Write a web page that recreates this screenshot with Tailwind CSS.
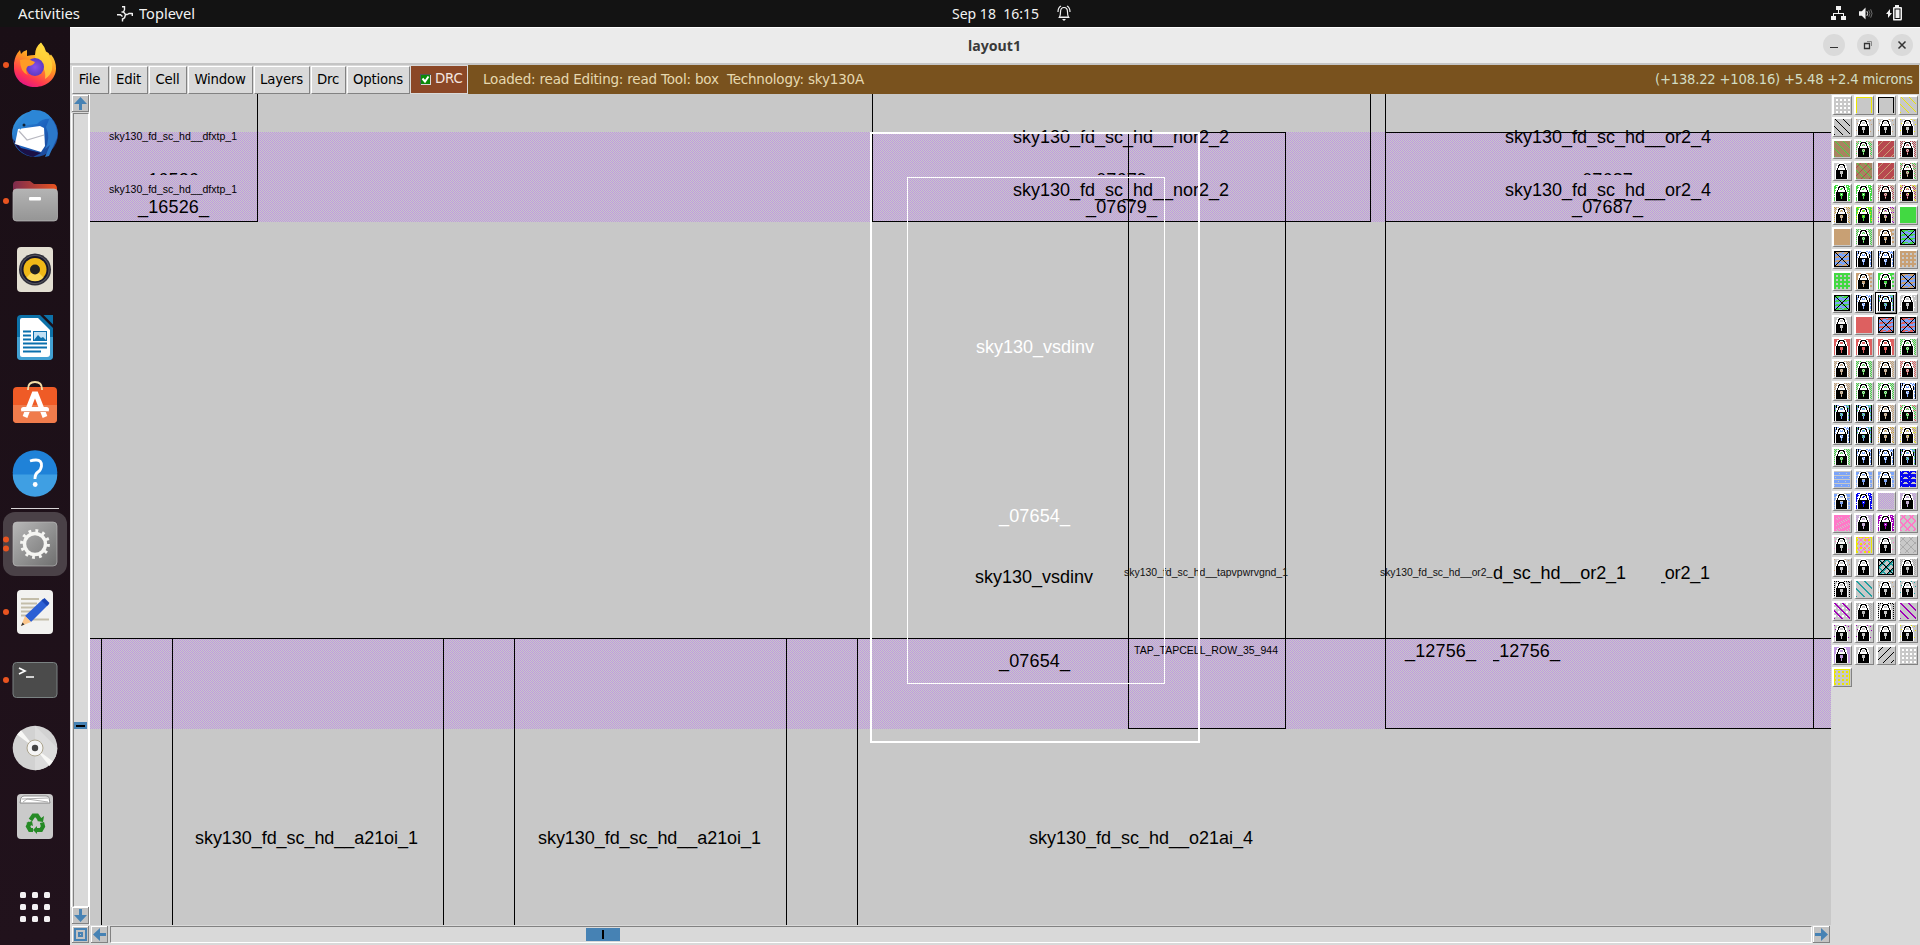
<!DOCTYPE html>
<html lang="en">
<head>
<meta charset="utf-8">
<title>layout1</title>
<script src="https://cdn.jsdelivr.net/npm/@tailwindcss/browser@4"></script>
</head>
<body class="w-[1920px] h-[945px] overflow-hidden flex flex-col bg-[#d9d9d9] font-['DejaVu_Sans',sans-serif]">

<!-- System bar -->
<header class="h-[27px] shrink-0 bg-[#131313] text-[#f2f2f2] flex items-center font-['Noto_Sans',sans-serif] text-[14.5px] leading-none whitespace-pre">
  <div class="w-[117px] pl-[18px]"><svg class="block" width="64" height="20"><text x="0" y="14.500" textLength="62" lengthAdjust="spacingAndGlyphs" fill="#f2f2f2">Activities</text></svg></div>
  <svg class="w-[16px] h-[16px]" viewBox="0 0 16 16" fill="none" stroke="#f2f2f2" stroke-width="1.4"><path d="M5 .7h2.500v3L6.500 6l2 2.500h2M6.500 6H4.500M0 8.700h3.500l2 1.800M10.500 8.500l1.500-1h3.500M15.300 7v3M8.500 8.500l-1 3.500M7.500 12l-2 1v2.500"/></svg>
  <svg class="ml-[6px]" width="60" height="20"><text x="0" y="14.500" textLength="56" lengthAdjust="spacingAndGlyphs" fill="#f2f2f2">Toplevel</text></svg>
  <div class="ml-[753px]"><svg class="block" width="90" height="20"><text x="0" y="14.500" textLength="87" lengthAdjust="spacingAndGlyphs" fill="#f2f2f2" xml:space="preserve">Sep 18  16:15</text></svg></div>
  <svg class="ml-[15px] -mt-px" width="14" height="17" viewBox="0 0 14 17" fill="none" stroke="#f2f2f2" stroke-width="1.200"><path d="M2.500 12c1-1.500 1-3 1-5C3.500 4 5 2.500 7 2.500S10.500 4 10.500 7c0 2 0 3.500 1 5zM1.500 12.500h11M1 7C1 4 2 2 4 1M13 7c0-3-1-5-3-6"/><path d="M5 14h4l-2 2z" fill="#f2f2f2" stroke="none"/></svg>
  <div class="ml-auto mr-[17px] -mt-px flex items-center gap-[13px]">
    <svg width="15" height="15" viewBox="0 0 15 15" fill="#f2f2f2"><path d="M5 0h5v4H5zM0 10h5v4H0zM10 10h5v4h-5zM7 4h1v3h5v3h-1V8H3v2H2V7h5z"/></svg>
    <svg width="14" height="15" viewBox="0 0 15 15" fill="#f2f2f2"><path d="M0 5h3l4-4v13l-4-4H0z"/><path d="M8.500 5q1.500 2.500 0 5" fill="none" stroke="#f2f2f2"/><path d="M10.500 4q2.500 3.500 0 7M12.500 3q3 4.500 0 9" fill="none" stroke="#777"/></svg>
    <svg width="17" height="16" viewBox="0 0 17 16" fill="#f2f2f2"><path d="M4 4v4h2l-4 5V9H0z"/><path d="M9 0h4v2h2q1 0 1 1v11q0 1.500-1.500 1.500h-7Q7 15.500 7 14V3q0-1 1-1h1zM8.500 3.500v10.500h6V3.500z" fill-rule="evenodd"/><path d="M9.500 4.500h4v8.500h-4z"/></svg>
  </div>
</header>

<div class="flex flex-1 min-h-0">
<!-- Dock -->
<nav class="w-[70px] shrink-0 bg-gradient-to-b from-[#1a0f16] to-[#21121c] flex flex-col items-center pt-[5px]">
 <svg width="70" height="64" viewBox="0 0 70 64">
  <defs><linearGradient id="ff" x1=".8" y1="0" x2=".3" y2="1"><stop offset="0" stop-color="#fff44f"/><stop offset=".45" stop-color="#ff9a20"/><stop offset=".8" stop-color="#ff3750"/><stop offset="1" stop-color="#e31587"/></linearGradient><radialGradient id="fp"><stop offset="0" stop-color="#8b50ea"/><stop offset="1" stop-color="#5b3ac4"/></radialGradient>
  <linearGradient id="tb" x1="0" y1="0" x2="1" y2="1"><stop offset="0" stop-color="#3ba2e4"/><stop offset=".5" stop-color="#1c62be"/><stop offset="1" stop-color="#1d3f8a"/></linearGradient>
  <linearGradient id="fo" x1="0" x2="1"><stop offset="0" stop-color="#7d2b4e"/><stop offset="1" stop-color="#e95420"/></linearGradient><linearGradient id="gr" x1="0" y1="0" x2="0" y2="1"><stop offset="0" stop-color="#b4b4b4"/><stop offset="1" stop-color="#959595"/></linearGradient></defs>
  <circle cx="6" cy="33" r="3" fill="#e95420"/>
  <path d="M14 31q1-8 6-13l1 4q2-3 6-4l0 6q4-1 8-1 0-8 6-12.500 4 4.500 5 9 3 1 4 4l1-1q5 6 5 14c0 10-9 18.500-21 18.500S14 47 14 36z" fill="url(#ff)"/>
  <path d="M41 11q3 4 4 9 9 8 7 18-2 6-7 9 2-12-10-19 0-11 6-17" fill="#ffd83c" opacity=".75"/>
  <circle cx="35" cy="35" r="9" fill="url(#fp)"/><path d="M20 28q8-2 15 2-2 4-7 4-4 4 0 9-8-3-8-15" fill="#ff9b25"/>
 </svg>
 <svg class="mt-1" width="70" height="64" viewBox="0 0 70 64">
  <circle cx="35" cy="34" r="23" fill="url(#tb)"/><path d="M13 39q4 14 20 18l8-4-20-5z" fill="#1b1146"/><path d="M18 29L40 26 44 28 45 46 41 52 15 44z" fill="#fff"/><path d="M19 31l8 9 17-5" fill="none" stroke="#b8b8c0" stroke-width="1.200"/><path d="M20 28q1-12 12-18 14-1 20 9-10-1-15 5l-10 1q-5 1-7 5z" fill="#2c86d6"/><path d="M50 17q9 10 7 21l-8 18-4 1 5-12-5 4q6-11 1-22z" fill="#2b78ca"/><circle cx="24" cy="25" r="1.500" fill="#123"/>
 </svg>
 <svg class="mt-1" width="70" height="64" viewBox="0 0 70 64">
  <circle cx="6" cy="33" r="3" fill="#e95420"/><path d="M13 17q0-4 4-4h13l4 3h19q4 0 4 5v15H13z" fill="url(#fo)"/><rect x="13" y="21" width="44.500" height="32" rx="3.500" fill="url(#gr)" stroke="#bdbdbd" stroke-width=".7"/><rect x="29" y="29" width="12" height="3.500" rx="1" fill="#fff"/>
 </svg>
 <svg class="mt-1" width="70" height="64" viewBox="0 0 70 64">
  <rect x="17" y="11" width="36" height="45" rx="4" fill="#e2ded2"/><circle cx="35" cy="33.500" r="16" fill="#30303a"/><circle cx="35" cy="33.500" r="14.500" fill="#555560"/><circle cx="35" cy="33.500" r="13.500" fill="#17172a"/><circle cx="35" cy="33.500" r="11.500" fill="#efb817"/><path d="M26.500 41.500a11.500 11.500 0 0 0 17 0L35 33z" fill="#fbd858"/><circle cx="35" cy="33.500" r="5" fill="#222"/>
 </svg>
 <svg class="mt-1" width="70" height="64" viewBox="0 0 70 64">
  <g transform="translate(0 1)"><path d="M21 10h19l13 13v28q0 4-4 4H21q-4 0-4-4V14q0-4 4-4" fill="#0d72a9"/><path d="M17 32h36v19q0 4-4 4H21q-4 0-4-4z" fill="#42a0d2"/><path d="M22 13h16l12 12v24q0 3-3 3H22q-2 0-2-2V15q0-2 2-2" fill="#fff"/><path d="M43.500 10H53v9.500z" fill="#0d72a9"/><path d="M23 26.500h8M23 30.500h8M23 34.500h8M23 38.500h24M23 42.500h24M23 46.500h18" stroke="#0b70ad" stroke-width="2"/><rect x="33.500" y="26.500" width="13" height="9" fill="#bfe0f5" stroke="#0b70ad"/><path d="M34 35l4-5 3 3 2-1 3 3z" fill="#0b70ad"/></g>
 </svg>
 <svg class="mt-1" width="70" height="64" viewBox="0 0 70 64">
  <g transform="translate(0 1)"><rect x="13" y="14" width="44" height="36" rx="4" fill="#ef5b26"/><path d="M13 32h44v14q0 4-4 4H17q-4 0-4-4z" fill="#f07c4c"/><path d="M28 17v-1q0-7 7-7t7 7v1" fill="none" stroke="#f6dfa8" stroke-width="1.800"/><path d="M25 44l9-23h2l9 23" fill="none" stroke="#fff" stroke-width="5"/><rect x="21" y="34" width="28" height="5" rx="2.500" fill="#fff"/><path d="M21.500 38.500h27" stroke="#e8a185"/></g>
 </svg>
 <svg class="mt-1" width="70" height="64" viewBox="0 0 70 64">
  <circle cx="35" cy="32.500" r="22.300" fill="#1f82d8"/><path d="M12.700 34.500a22.300 22.300 0 0 0 44.600 0z" fill="#3f9fe3"/><path d="M30 21q3-1 6-1 6 0 5.500 6-.5 4-3.500 6-3 2-3 6v1" fill="none" stroke="#fff" stroke-width="2.800"/><circle cx="35.200" cy="44.500" r="2.400" fill="#fff"/>
 </svg>
 <div class="h-px w-[48px] bg-[#d8d4d6] mt-[4px] mb-[3px] shrink-0"></div>
 <svg class="shrink-0" width="70" height="64" viewBox="0 0 70 64">
  <rect x="3" y="0" width="64" height="64" rx="12" fill="#4a4147"/><circle cx="6" cy="27.500" r="3" fill="#e95420"/><circle cx="6" cy="36.500" r="3" fill="#e95420"/>
  <defs><linearGradient id="sg" x1="0" y1="0" x2="1" y2="1"><stop offset="0" stop-color="#b8b8b8"/><stop offset="1" stop-color="#6f6f6f"/></linearGradient></defs>
  <rect x="13" y="10" width="44" height="44" rx="4" fill="url(#sg)" stroke="#c0c0c0" stroke-width=".6"/><circle cx="35" cy="32" r="10.500" fill="none" stroke="#f5f5f2" stroke-width="3.400"/><circle cx="35" cy="32" r="13.200" fill="none" stroke="#f5f5f2" stroke-width="3.400" stroke-dasharray="2.800 4.112"/>
 </svg>
 <svg class="mt-1" width="70" height="64" viewBox="0 0 70 64">
  <circle cx="6" cy="32" r="3" fill="#e95420"/><rect x="17" y="10" width="36" height="44" rx="4" fill="#f2f2f0"/><path d="M21 19h18M21 23.500h16M21 27.500h14M21 31.500h10M21 35.500h8M30 39.500h19" stroke="#c3bda9" stroke-width="1.800"/><path d="M25 36L43 19l6 5-18 18z" fill="#2c5fd4"/><path d="M41.500 20.500l3-2.500 5 5-2.500 3z" fill="#1a45b4"/><path d="M21 46l4-10 6 6z" fill="#fbc68b"/><path d="M21 46l1.500-3.500 2 2z" fill="#333"/>
 </svg>
 <svg class="mt-1" width="70" height="64" viewBox="0 0 70 64">
  <circle cx="6" cy="32" r="3" fill="#e95420"/><rect x="13" y="14.500" width="44" height="35" rx="3.500" fill="#4b4b4b" stroke="#7a8282"/><path d="M19 20l6 3-6 3" fill="none" stroke="#fff" stroke-width="1.700"/><path d="M26 29h8" stroke="#fff" stroke-width="1.500"/>
 </svg>
 <svg class="mt-1" width="70" height="64" viewBox="0 0 70 64">
  <circle cx="35" cy="32" r="22.300" fill="#d2d2d2"/><path d="M35 9.700v44.600a22.300 22.300 0 0 0 22.300-22.300z" fill="#dcdcdc"/><path d="M35 32L17 18.500l4-4.200zM35 32l18 13.500-3.500 4.500z" fill="#f8f8f6"/><circle cx="35" cy="32" r="8" fill="#f5f5f5" stroke="#aba38c"/><circle cx="35" cy="32" r="3.200" fill="#444"/>
 </svg>
 <svg class="mt-1" width="70" height="64" viewBox="0 0 70 64">
  <rect x="17" y="10" width="36" height="45" rx="4" fill="#cacaca"/><path d="M20 19l1-5q1-2 3-2h22q3 0 3 2l1 5z" fill="#fff" stroke="#777" stroke-width=".8"/><path d="M22 15l26-1M23 18l4-3 21 3" stroke="#999" stroke-width=".8" fill="none"/>
  <g fill="none" stroke="#258a25" stroke-width="4.200"><path d="M30.500 36l3-4.500h3.500l3 4.500"/><path d="M42 38.500l1 4-2 3.500h-5"/><path d="M33 46h-3l-2-3.500 2-4"/></g><path d="M37 37l6 1 1-6zM37 42l-4 4 4 4zM26 39l6-2 1 5z" fill="#258a25"/>
 </svg>
 <svg class="mt-[43px]" width="32" height="32" viewBox="0 0 32 32" fill="#f3f1f2"><g id="gd"><rect x="1" y="1" width="6" height="6" rx="1.500"/><rect x="13" y="1" width="6" height="6" rx="1.500"/><rect x="25" y="1" width="6" height="6" rx="1.500"/></g><use href="#gd" y="12"/><use href="#gd" y="24"/></svg>
</nav>

<!-- Application window -->
<main class="flex-1 min-w-0 flex flex-col">
 <div class="h-[38px] shrink-0 bg-[#ebebeb] border-t border-white border-b-2 border-b-[#c4c4c4] flex items-center relative">
  <svg class="absolute left-[895px] top-[5px]" width="60" height="24"><text x="3" y="18" textLength="53" lengthAdjust="spacingAndGlyphs" font-family="Noto Sans" font-weight="700" font-size="14" fill="#3a3a3a">layout1</text></svg>
  <div class="ml-auto mr-[7px] -mt-px flex gap-3">
   <svg width="22" height="22" viewBox="0 0 22 22"><circle cx="11" cy="11" r="11" fill="#dadada"/><path d="M7 13.500h8" stroke="#333"/></svg>
   <svg width="22" height="22" viewBox="0 0 22 22"><circle cx="11" cy="11" r="11" fill="#dadada"/><path d="M7.500 9.500h5v5h-5z" fill="none" stroke="#333" stroke-width="1.300"/><path d="M10 7.500h4.500V12" fill="none" stroke="#888"/></svg>
   <svg width="22" height="22" viewBox="0 0 22 22"><circle cx="11" cy="11" r="11" fill="#dadada"/><path d="M7.500 7.500l7 7M14.500 7.500l-7 7" stroke="#333" stroke-width="1.500"/></svg>
  </div>
 </div>

 <!-- Menu row -->
 <div class="h-[29px] shrink-0 flex items-stretch bg-[#79521e] text-[13.3px] tracking-[-0.2px] leading-none text-black pr-px mr-px">
  <div class="flex gap-px bg-[#d9d9d9] pl-[2px] pt-px">
   <div class="w-[37px] border border-t-white border-l-white border-r-[#828282] border-b-[#828282] flex items-center justify-center pb-px pr-[2px]"><span>File</span></div>
   <div class="w-[38px] border border-t-white border-l-white border-r-[#828282] border-b-[#828282] flex items-center justify-center pb-px pr-px"><span>Edit</span></div>
   <div class="w-[38px] border border-t-white border-l-white border-r-[#828282] border-b-[#828282] flex items-center justify-center pb-px pr-px"><span>Cell</span></div>
   <div class="w-[65px] border border-t-white border-l-white border-r-[#828282] border-b-[#828282] flex items-center justify-center pb-px pr-px"><span>Window</span></div>
   <div class="w-[56px] border border-t-white border-l-white border-r-[#828282] border-b-[#828282] flex items-center justify-center pb-px pr-px"><span>Layers</span></div>
   <div class="w-[35px] border border-t-white border-l-white border-r-[#828282] border-b-[#828282] flex items-center justify-center pb-px pr-px"><span>Drc</span></div>
   <div class="w-[63px] border border-t-white border-l-white border-r-[#828282] border-b-[#828282] flex items-center justify-center pb-px pr-px"><span>Options</span></div>
   <div class="w-[56px] bg-[#8b4726] text-[#f5e6e0] flex items-center pl-[9px] pb-px mb-px">
    <svg width="11" height="11" viewBox="0 0 11 11"><path d="M0 0h11v11H0z" fill="#d9d9d9"/><path d="M0 0h11v1H1v10H0z" fill="#555"/><path d="M1 1h9v9H1z" fill="#0a8a0a"/><path d="M2.500 4.500l2.500 3 3.500-5" fill="none" stroke="#fff" stroke-width="2"/></svg>
    <span class="ml-[4px]">DRC</span>
   </div>
   <div class="w-0"></div>
  </div>
  <svg class="ml-[15px] mt-[3px]" width="390" height="20"><text x="0" y="15.500" textLength="381" lengthAdjust="spacingAndGlyphs" fill="#e6d9b0" font-size="13.300" xml:space="preserve">Loaded: read Editing: read Tool: box  Technology: sky130A</text></svg>
  <svg class="ml-auto mr-[2px] mt-[3px]" width="264" height="20"><text x="3" y="15.500" textLength="258" lengthAdjust="spacingAndGlyphs" fill="#d2ddc4" font-size="13.300">(+138.22 +108.16) +5.48 +2.4 microns</text></svg>
 </div>

 <div class="flex flex-1 min-h-0">
  <div class="w-[1761px] shrink-0 flex flex-col">
   <div class="flex h-[831px]">
    <!-- Vertical scroll bar -->
    <div class="w-[20px] flex flex-col items-center pt-px border-r border-white">
     <svg class="shrink-0 ml-[2px]" width="17" height="17" viewBox="0 0 17 17"><path d="M0 0h17v17H0z" fill="#828282"/><path d="M0 0h16v16H0z" fill="#fff"/><path d="M1 1h15v15H1z" fill="#c3c3c3"/><path d="M8.500 2L15 9h-5v6H7V9H2z" fill="#4682b4"/></svg>
     <div class="mt-px w-[18px] h-[794px] shrink-0 border-l border-white">
      <div class="ml-px w-[16px] h-[794px] border border-l-[#828282] border-t-[#828282] border-r-white border-b-white pt-[608px]">
       <div class="w-[13px] h-[7px] mx-auto bg-[#4682b4] flex items-center justify-center"><div class="w-[9px] h-[2px] bg-black"></div></div>
      </div>
     </div>
     <svg class="shrink-0 ml-[2px]" width="17" height="17" viewBox="0 0 17 17"><path d="M0 0h17v17H0z" fill="#828282"/><path d="M0 0h16v16H0z" fill="#fff"/><path d="M1 1h15v15H1z" fill="#c3c3c3"/><path d="M8.500 15L2 8h5V2h3v6h5z" fill="#4682b4"/></svg>
    </div>

    <!-- Layout canvas -->
    <svg class="block shrink-0" width="1741" height="831" viewBox="90 94 1741 831" font-family="Liberation Sans, Arial, sans-serif" font-size="18">
     <defs>
      <pattern id="nw" width="2" height="2" patternUnits="userSpaceOnUse"><path d="M0 0h1v1H0zM1 1h1v1H1z" fill="#c098e0" shape-rendering="crispEdges"/></pattern>
      <clipPath id="c1"><path d="M90 170h1741v5H90z"/></clipPath>
      <clipPath id="c2"><path d="M1493 640h200v40h-200zM1661 560h100v30h-100z"/></clipPath>
      <clipPath id="c3"><path d="M1370 560h123v30h-123z"/></clipPath>
     </defs>
     <path d="M90 94h1741v831H90z" fill="#c8c8c8"/>
     <path d="M90 132h1741v90H90zM90 639h1741v90H90z" fill="url(#nw)"/>
     <g fill="none" stroke="#000" shape-rendering="crispEdges">
      <path d="M257.500 94V221.500H90M872.500 94V221.500H1370.500V94M872.500 132.500H1285.500V728.500H1128.500V132.500"/>
      <path d="M1385.500 94V728.500H1831M1385.500 132.500H1831M1385.500 221.500H1831M1813.500 132V728M90 638.500H1831"/>
      <path d="M101.500 638V925M172.500 638V925M443.500 638V925M514.500 638V925M786.500 638V925M857.500 638V925"/>
     </g>
     <g fill="#000">
      <text x="109" y="140" font-size="10.500" textLength="128" lengthAdjust="spacingAndGlyphs">sky130_fd_sc_hd__dfxtp_1</text>
      <text x="109" y="193" font-size="10.500" textLength="128" lengthAdjust="spacingAndGlyphs">sky130_fd_sc_hd__dfxtp_1</text>
      <text x="138" y="213" textLength="71">_16526_</text>
      <text x="1013" y="143" textLength="216">sky130_fd_sc_hd__nor2_2</text>
      <text x="1013" y="196" textLength="216">sky130_fd_sc_hd__nor2_2</text>
      <text x="1086" y="213" textLength="71">_07679_</text>
      <text x="1505" y="143" textLength="206">sky130_fd_sc_hd__or2_4</text>
      <text x="1505" y="196" textLength="206">sky130_fd_sc_hd__or2_4</text>
      <text x="1572" y="213" textLength="71">_07687_</text>
      <g clip-path="url(#c1)"><text x="138" y="186" textLength="71">_16526_</text><text x="1086" y="186" textLength="71">_07679_</text><text x="1572" y="186" textLength="71">_07687_</text></g>
      <text x="975" y="583" textLength="118">sky130_vsdinv</text>
      <text x="999" y="667" textLength="71">_07654_</text>
      <text x="1124" y="576" font-size="10.500" fill="#111" textLength="164" lengthAdjust="spacingAndGlyphs">sky130_fd_sc_hd__tapvpwrvgnd_1</text>
      <text x="1134" y="654" font-size="10.500" textLength="144" lengthAdjust="spacingAndGlyphs">TAP_TAPCELL_ROW_35_944</text>
      <g clip-path="url(#c3)"><text x="1380" y="576" font-size="10.500" fill="#111" textLength="118" lengthAdjust="spacingAndGlyphs">sky130_fd_sc_hd__or2_1</text></g>
      <text x="1493" y="579" textLength="133">d_sc_hd__or2_1</text>
      <g clip-path="url(#c2)"><text x="1655" y="579" textLength="55">_or2_1</text><text x="1489" y="657" textLength="71">_12756_</text></g>
      <text x="1405" y="657" textLength="71">_12756_</text>
      <text x="195" y="844" textLength="223">sky130_fd_sc_hd__a21oi_1</text>
      <text x="538" y="844" textLength="223">sky130_fd_sc_hd__a21oi_1</text>
      <text x="1029" y="844" textLength="224">sky130_fd_sc_hd__o21ai_4</text>
     </g>
     <g fill="#fff"><text x="976" y="353" textLength="118">sky130_vsdinv</text><text x="999" y="522" textLength="71">_07654_</text></g>
     <g fill="none" stroke="#fff" shape-rendering="crispEdges"><path d="M907.500 177.500H1164.500V683.500H907.500z"/><path d="M871 133H1199V742H871z" stroke-width="2"/></g>
    </svg>
   </div>
   <!-- Horizontal scroll bar -->
   <div class="flex flex-1 items-start pl-[2px] pt-px">
    <svg class="shrink-0" width="17" height="17" viewBox="0 0 17 17"><path d="M0 0h17v17H0z" fill="#828282"/><path d="M0 0h16v16H0z" fill="#fff"/><path d="M1 1h15v15H1z" fill="#c3c3c3"/><path d="M3 3h11v11H3z" fill="none" stroke="#4682b4" stroke-width="2"/><path d="M6 6h5v5H6zM8 8v1h1V8z" fill="#4682b4" fill-rule="evenodd"/></svg>
    <svg class="ml-[2px] shrink-0" width="17" height="17" viewBox="0 0 17 17"><path d="M0 0h17v17H0z" fill="#828282"/><path d="M0 0h16v16H0z" fill="#fff"/><path d="M1 1h15v15H1z" fill="#c3c3c3"/><path d="M2 8.500L9 2v5h6v3H9v5z" fill="#4682b4"/></svg>
    <div class="ml-[2px] w-[1702px] h-[17px] shrink-0 border border-t-[#828282] border-l-[#828282] border-r-white border-b-white pl-[475px] flex items-center">
     <div class="w-[34px] h-[13px] bg-[#4682b4] flex items-center justify-center"><div class="w-[2px] h-[9px] bg-black"></div></div>
    </div>
    <svg class="ml-px shrink-0" width="17" height="17" viewBox="0 0 17 17"><path d="M0 0h17v17H0z" fill="#828282"/><path d="M0 0h16v16H0z" fill="#fff"/><path d="M1 1h15v15H1z" fill="#c3c3c3"/><path d="M15 8.500L8 2v5H2v3h6v5z" fill="#4682b4"/></svg>
   </div>
  </div>
  <!-- Layer palette -->
  <div id="palette" class="flex-1 bg-[#d9d9d9] pl-px pt-px grid grid-cols-[repeat(4,20px)] auto-rows-[20px] gap-[2px] content-start"></div>
 </div>
</main>
</div>

<script>
const C={g:'#42d942',t:'#c8a074',r:'#dd6060',c:'#b8484f',b:'#7ca4f8',n:'#a88460',p:'#c098e0',y:'#ebe600',m:'#a000b8',e:'#20a0a0',k:'#ff78c8',w:'#ffffff',x:'#000000',a:'#aaaaaa',u:'#0808f0',o:'#d09a20',_:'#c8c8c8'};
const px=(f,col)=>{let d='';for(let y=0;y<16;y++)for(let x=0;x<16;x++)if(f(x,y))d+=`M${x} ${y}h1v1h-1z`;return `<path d="${d}" fill="${C[col]}"/>`};
const edge=(x,y)=>x==0||y==0||x==15;
// Fill styles, named by the first letter of each palette token; following letters are colours
const S={
 p:()=>'',
 s:a=>px(()=>1,a),
 c:(a,b)=>px((x,y)=>(x+y)%2==0,a)+(b?px((x,y)=>(x+y)%2==0&&(x*3+y*5)%7<2,b):''),
 z:(a,b)=>px(()=>1,a)+(b?px((x,y)=>(x*3+y*5)%11<2,b):''),
 d:(a,b)=>(b?px(()=>1,b):'')+px((x,y)=>(x-y+16)%8==1,a),
 D:(a,b)=>(b?px((x,y)=>x%4<2&&y%4<2,b):'')+px((x,y)=>(x-y+16)%8<2,a),
 f:(a,b)=>(b?px(()=>1,b):'')+px((x,y)=>(x+y)%8==4,a),
 x:(a,b,c)=>(c?px(()=>1,c):'')+px((x,y)=>(x-y+16)%8==1,a)+px((x,y)=>(x+y)%8==4,b||a),
 R:a=>px((x,y)=>{const d=(x-y+16)%8,s=(x+y)%8;return d==1||d==2||s==4||s==5},a),
 g:a=>px((x,y)=>x%4>1&&y%4>1,a),
 G:a=>px((x,y)=>!(x%4>1&&y%4>1),a),
 o:a=>px((x,y)=>edge(x,y),a),
 q:a=>px((x,y)=>edge(x,y)&&(x+y)%2==0,a),
 v:a=>px((x,y)=>(x*5+y*7)%11==0&&(x<4||x>11||y<3),a),
 h:a=>px((x,y)=>y%4>0&&!(y%4==2&&(x+y)%7==0),a),
 F:(a,b)=>px((x,y)=>x>0&&x<15,a)+px((x,y)=>(x*3+y*5)%7<2,b||'w')+px((x,y)=>x==0||x==15||(x==2&&y<5)||(x==13&&y>2),'x'),
 X:(a)=>px(()=>1,'b')+px((x,y)=>y%4==1&&x%8>1||y%4==2&&x%8<5,a)+px((x,y)=>x==0||y==0||x==15||y==15||x==y||x+y==15,'x'),
 Y:()=>px((x,y)=>(x+8-y+16)%8<2||(x+y)%8<2,'e')+px((x,y)=>x==0||y==0||x==15||y==15||x==y||(x+y)%8==7,'x'),
 K:()=>px((x,y)=>!((x*7+y*3)%11<2&&x>1&&y>1),'k'),
 U:()=>px((x,y)=>!((y%5==1&&x%8>3&&x%8<7)||(y%5==2&&x%8>2)||(y%5==0&&x%8==1)),'u'),
 Z:(a)=>px((x,y)=>x==0||y==0||x==15||(x%4<2&&y%4>1),'y')+(a?px((x,y)=>x>1&&x<14&&((x+y)%6==1||(x-y+18)%6==2),a):'')
};
// Padlock: white halo, then black shackle and body with an open keyhole
const lw='M5 0h5v1H5zM3 1h2v1H3zM10 1h2v1h-2zM3 2h1v1H3zM11 2h1v1h-1zM6 2h3v1H6zM2 3h2v2H2zM11 3h2v2h-2zM2 5h1v2H2zM12 5h1v2h-1zM5 3h1v3H5zM9 3h1v3H9zM4 5h7v2H4zM1 7h1v9H1zM13 7h1v9h-1z';
const lk='M5 1h5v1H5zM4 2h2v1H4zM9 2h2v1H9zM4 3h1v2H4zM10 3h1v2h-1zM3 5h1v2H3zM11 5h1v2h-1zM2 7h11v1H2zM2 8h4v3H2zM9 8h4v3H9zM2 11h5v3H2zM8 11h5v3H8zM2 14h11v2H2z';
const rows=`gw oy ox dy|dx Lvt Lvt Lvy|dgn Lcgt ftc Lcc|Lp xgcn ftc Lcng|Lzgw Lzgw Lcct Lccy|Lcto Lzgy Lctm sg|st Lcg LGt Xg|Xt LFb LFb Gt|Gg LGt LGg Xt|Xg LFb LFbg! Lvw|Lp sr Xr Xr|Lsr Lsr Lsr Lcg|Lct Lcg Lct Lcr|Lct Lcg Lcg LFb|LFbg LFbg Lct Lcgr|LFb LFbg Lcto Lcty|Lcg LFb LFb LFbg|hb Lhb Lhb U|Lhb Lzuw cp Lcp|K Lcp Lzmw Rk|Lvk Zk Lvk xa|Lvt Lp Y Lca|Lqx De Lvt Lve|Dmw Lca Lqx Dm|Lvm Lvm Loa Lvy|Lsp Lp fx gw|Z`;
document.getElementById('palette').innerHTML=rows.split('|').join(' ').split(' ').map(t=>{
 const sel=t.endsWith('!');t=t.replace('!','');
 const lock=t[0]=='L';if(lock)t=t.slice(1);
 return `<div class="${sel?'w-5 h-5 border border-l-2 border-t-2 border-t-white border-l-white border-r-[#828282] border-b-[#828282] outline outline-1 outline-black':'w-5 h-5 border border-l-2 border-t-2 border-t-white border-l-white border-r-[#828282] border-b-[#828282] bg-[#c8c8c8]'}"><svg class="block" width="16" height="16" viewBox="0 0 16 16" shape-rendering="crispEdges"><path d="M0 0h16v16H0z" fill="#c8c8c8"/>${S[t[0]](...t.slice(1))}${lock?`<path d="${lw}" fill="#fff"/><path d="${lk}" fill="#000"/>`:''}</svg></div>`;
}).join('');
</script>
</body>
</html>
